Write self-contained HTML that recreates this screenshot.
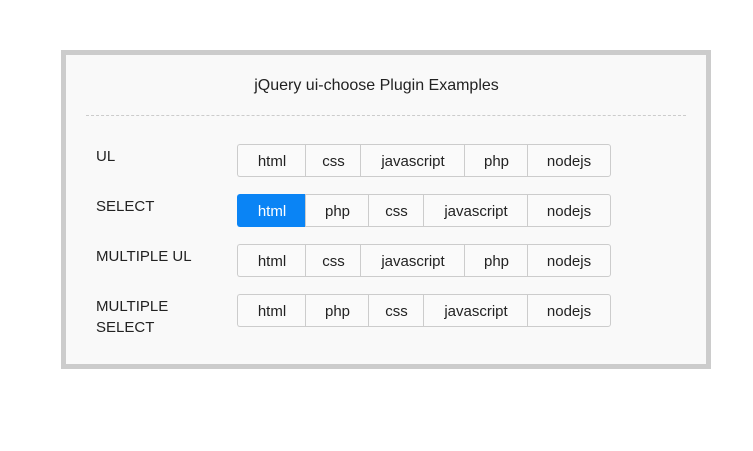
<!DOCTYPE html><html><head><style>
body{margin:0;width:753px;height:451px;background:#fff;font-family:"Liberation Sans",sans-serif;position:relative;overflow:hidden}
.box{position:absolute;left:61px;top:50px;width:640px;height:309px;border:5px solid #ccc;background:#f9f9f9}
.t{position:absolute;left:0;width:100%;top:77px;text-align:center;font-size:16px;color:#222}
.line{position:absolute;left:86px;width:600px;top:115px;border-top:1px dashed #ccc}
.l{position:absolute;left:96px;font-size:15px;color:#222;line-height:21px}
.b{position:absolute;height:31px;border:1px solid #ccc;background:#fafafa;box-sizing:content-box;font-size:15px;line-height:34px;text-align:center;color:#222}
.on{background:#0a84f5;border-color:#0a84f5;color:#fff}
</style></head><body>
<div class="box"></div>
<div class="t">jQuery ui-choose Plugin Examples</div>
<div class="line"></div>
<div class="l" style="top:146px">UL</div>
<div class="l" style="top:196px">SELECT</div>
<div class="l" style="top:246px">MULTIPLE UL</div>
<div class="l" style="top:296px">MULTIPLE<br>SELECT</div>
<div id="r"></div>
<script>
var rows=[[144,[["html",237,305],["css",305,360],["javascript",360,464],["php",464,527],["nodejs",527,610]]],
[194,[["html",237,305,1],["php",305,368],["css",368,423],["javascript",423,527],["nodejs",527,610]]],
[244,[["html",237,305],["css",305,360],["javascript",360,464],["php",464,527],["nodejs",527,610]]],
[294,[["html",237,305],["php",305,368],["css",368,423],["javascript",423,527],["nodejs",527,610]]]];
var h="";rows.forEach(function(r){r[1].forEach(function(b,i){var rad=i==0?"border-radius:3px 0 0 3px;":i==4?"border-radius:0 3px 3px 0;":"";h+='<div class="b'+(b[3]?' on':'')+'" style="'+rad+'top:'+r[0]+'px;left:'+b[1]+'px;width:'+(b[2]-b[1]-(i==4?1:0))+'px;'+(i<4?'border-right:none;':'')+'">'+b[0]+'</div>';});});
document.getElementById("r").innerHTML=h;
</script>
</body></html>
